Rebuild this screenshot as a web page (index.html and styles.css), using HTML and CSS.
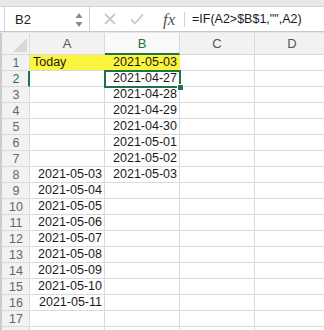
FILE: index.html
```html
<!DOCTYPE html>
<html>
<head>
<meta charset="utf-8">
<link rel="stylesheet" href="styles.css">
</head>
<body>
<div class="app">
  <div class="topstrip"></div>
  <div class="fbar">
    <div class="namebox">
      <span class="ref">B2</span>
      <svg class="spin" width="8" height="16" viewBox="0 0 8 16"><path d="M4 1 L7.5 6 L0.5 6 Z" fill="#8a8a8a"/><path d="M0.5 10 L7.5 10 L4 15 Z" fill="#8a8a8a"/></svg>
    </div>
    <div class="tools">
      <svg class="ic-x" width="12" height="12" viewBox="0 0 12 12"><path d="M1 1 L11 11 M11 1 L1 11" stroke="#c9c9c9" stroke-width="1.8"/></svg>
      <svg class="ic-ok" width="14" height="12" viewBox="0 0 14 12"><path d="M1 6.5 L5 10.5 L13 1.5" stroke="#c9c9c9" stroke-width="1.8" fill="none"/></svg>
      <span class="fx">fx</span>
    </div>
    <div class="formula">=IF(A2&gt;$B$1,"",A2)</div>
  </div>
  <div class="band"></div>
  <div class="sheet">
    <div class="grid">
      <div class="corner"><span class="tri"></span></div>
      <div class="ch">A</div>
      <div class="ch sel">B</div>
      <div class="ch">C</div>
      <div class="ch">D</div>

      <div class="rh">1</div><div class="c yl">Today</div><div class="c yl r">2021-05-03</div><div class="c"></div><div class="c"></div>
      <div class="rh selr">2</div><div class="c"></div><div class="c r">2021-04-27</div><div class="c"></div><div class="c"></div>
      <div class="rh">3</div><div class="c"></div><div class="c r">2021-04-28</div><div class="c"></div><div class="c"></div>
      <div class="rh">4</div><div class="c"></div><div class="c r">2021-04-29</div><div class="c"></div><div class="c"></div>
      <div class="rh">5</div><div class="c"></div><div class="c r">2021-04-30</div><div class="c"></div><div class="c"></div>
      <div class="rh">6</div><div class="c"></div><div class="c r">2021-05-01</div><div class="c"></div><div class="c"></div>
      <div class="rh">7</div><div class="c"></div><div class="c r">2021-05-02</div><div class="c"></div><div class="c"></div>
      <div class="rh">8</div><div class="c r">2021-05-03</div><div class="c r">2021-05-03</div><div class="c"></div><div class="c"></div>
      <div class="rh">9</div><div class="c r">2021-05-04</div><div class="c"></div><div class="c"></div><div class="c"></div>
      <div class="rh">10</div><div class="c r">2021-05-05</div><div class="c"></div><div class="c"></div><div class="c"></div>
      <div class="rh">11</div><div class="c r">2021-05-06</div><div class="c"></div><div class="c"></div><div class="c"></div>
      <div class="rh">12</div><div class="c r">2021-05-07</div><div class="c"></div><div class="c"></div><div class="c"></div>
      <div class="rh">13</div><div class="c r">2021-05-08</div><div class="c"></div><div class="c"></div><div class="c"></div>
      <div class="rh">14</div><div class="c r">2021-05-09</div><div class="c"></div><div class="c"></div><div class="c"></div>
      <div class="rh">15</div><div class="c r">2021-05-10</div><div class="c"></div><div class="c"></div><div class="c"></div>
      <div class="rh">16</div><div class="c r">2021-05-11</div><div class="c"></div><div class="c"></div><div class="c"></div>
      <div class="rh">17</div><div class="c"></div><div class="c"></div><div class="c"></div><div class="c"></div>
      <div class="rh"></div><div class="c"></div><div class="c"></div><div class="c"></div><div class="c"></div>
    </div>
    <div class="selbox"><span class="handle"></span></div>
  </div>
</div>
</body>
</html>
```
FILE: styles.css
```css
html, body {
  margin: 0;
  padding: 0;
  background: #ffffff;
}
body {
  width: 324px;
  height: 330px;
  overflow: hidden;
  font-family: "Liberation Sans", Arial, sans-serif;
  font-size: 12.5px;
  color: #1a1a1a;
}
.app {
  width: 324px;
  height: 330px;
  overflow: hidden;
}
.topstrip {
  height: 6px;
  background: #e8e8e8;
  border-bottom: 1px solid #d2d2d2;
}
.fbar {
  height: 24px;
  display: flex;
  align-items: stretch;
  background: #ffffff;
  border-bottom: 1px solid #c9c9c9;
}
.namebox {
  margin-left: 4px;
  width: 86px;
  border-left: 1px solid #d4d4d4;
  border-right: 1px solid #cfcfcf;
  display: flex;
  align-items: center;
  justify-content: space-between;
  padding: 0 6px 0 10px;
  box-sizing: border-box;
}
.ref {
  font-size: 13px;
  color: #222;
}
.spin {
  display: block;
  margin-top: 1px;
}
.tools {
  display: flex;
  align-items: center;
  width: 97px;
}
.ic-x {
  margin-left: 14px;
}
.ic-ok {
  margin-left: 14px;
}
.fx {
  margin-left: 19px;
  font-family: "Liberation Serif", "Times New Roman", serif;
  font-style: italic;
  font-size: 17px;
  color: #555;
  padding-right: 9px;
  border-right: 1px solid #d0d0d0;
  line-height: 15px;
}
.formula {
  display: flex;
  align-items: center;
  padding-left: 5px;
  font-size: 12.5px;
  color: #1a1a1a;
}
.band {
  height: 1px;
  background: #e6e6e6;
}
.sheet {
  position: relative;
}
.grid {
  display: grid;
  grid-template-columns: 30px 75px 75px 75px 75px;
  grid-template-rows: 22px;
  grid-auto-rows: 16px;
}
.grid > div {
  box-sizing: border-box;
  border-right: 1px solid #dadada;
  border-bottom: 1px solid #dadada;
  white-space: nowrap;
  overflow: hidden;
}
.corner {
  background: #f2f2f2;
  border-left: 2px solid #cdcdcd;
  position: relative;
}
.tri {
  position: absolute;
  right: 2px;
  bottom: 2px;
  width: 0;
  height: 0;
  border-left: 14px solid transparent;
  border-bottom: 14px solid #d9d9d9;
}
.ch {
  background: #f2f2f2;
  color: #555;
  font-size: 13px;
  display: flex;
  align-items: center;
  justify-content: center;
}
.grid > .ch.sel {
  background: #f9f9f9;
  color: #217346;
  border-bottom: 2px solid #217346;
  padding-top: 1px;
}
.rh {
  background: #f2f2f2;
  color: #666;
  font-size: 12.5px;
  border-left: 2px solid #cdcdcd;
  display: flex;
  align-items: center;
  justify-content: center;
  padding-left: 1px;
}
.grid > .rh.selr {
  color: #217346;
  border-right: 2px solid #217346;
  padding-left: 2px;
}
.c {
  display: flex;
  align-items: center;
  padding: 0 2px 0 3px;
  line-height: 15px;
}
.c.r {
  justify-content: flex-end;
}
.grid > .c.yl {
  background: #fbf53d;
  border-right-color: #fbf53d;
}
.selbox {
  position: absolute;
  left: 104px;
  top: 37px;
  width: 77px;
  height: 18px;
  box-sizing: border-box;
  border: 2px solid #217346;
}
.handle {
  position: absolute;
  right: -5px;
  bottom: -5px;
  width: 5px;
  height: 5px;
  background: #217346;
  border: 1px solid #fff;
}
```
